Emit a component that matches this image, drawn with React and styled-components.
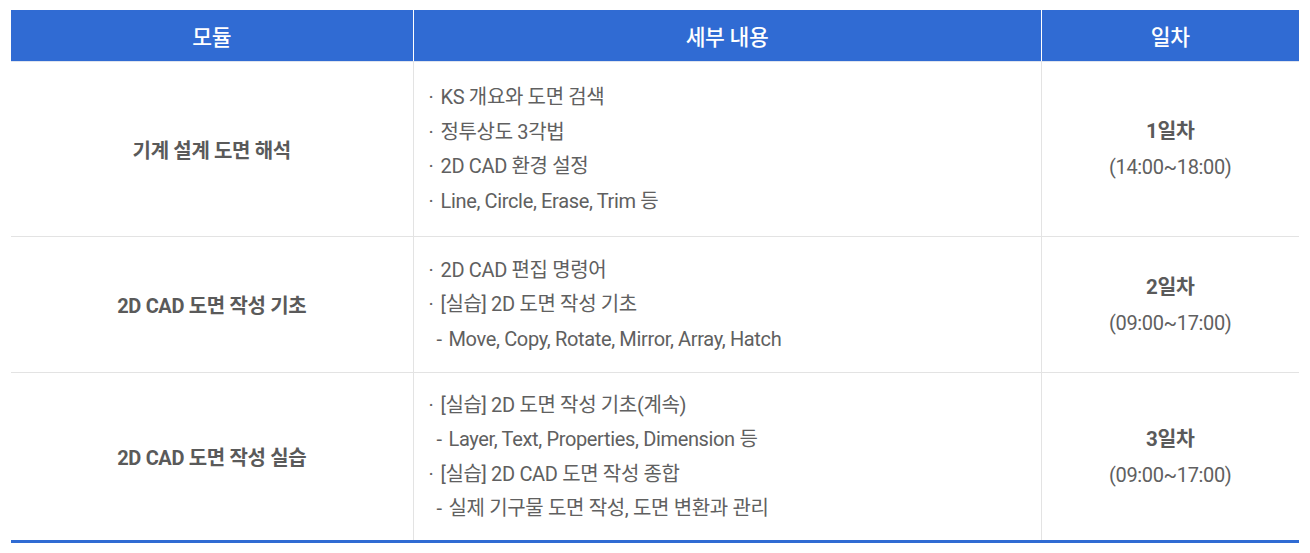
import styled, { createGlobalStyle } from 'styled-components';

const GlobalStyle = createGlobalStyle`
  body {
    margin: 0;
    background: #fff;
    font-family: Roboto, "Noto Sans CJK KR", sans-serif;
  }
`;

const rows = [
  {
    height: 175,
    module: '기계 설계 도면 해석',
    items: [
      '· KS 개요와 도면 검색',
      '· 정투상도 3각법',
      '· 2D CAD 환경 설정',
      '· Line, Circle, Erase, Trim 등',
    ],
    day: '1일차',
    time: '(14:00~18:00)',
  },
  {
    height: 136,
    module: '2D CAD 도면 작성 기초',
    items: [
      '· 2D CAD 편집 명령어',
      '· [실습] 2D 도면 작성 기초',
      '- Move, Copy, Rotate, Mirror, Array, Hatch',
    ],
    day: '2일차',
    time: '(09:00~17:00)',
  },
  {
    height: 169,
    module: '2D CAD 도면 작성 실습',
    items: [
      '· [실습] 2D 도면 작성 기초(계속)',
      '- Layer, Text, Properties, Dimension 등',
      '· [실습] 2D CAD 도면 작성 종합',
      '- 실제 기구물 도면 작성, 도면 변환과 관리',
    ],
    day: '3일차',
    time: '(09:00~17:00)',
  },
];

export default function App() {
  return (
    <>
      <GlobalStyle />
      <Wrap>
        <Table>
          <colgroup>
            <col style={{ width: 402 }} />
            <col style={{ width: 628 }} />
            <col />
          </colgroup>
          <thead>
            <tr>
              <Th>모듈</Th>
              <Th>세부 내용</Th>
              <Th>일차</Th>
            </tr>
          </thead>
          <tbody>
            {rows.map((r, i) => (
              <Row key={i} $h={r.height}>
                <ModuleCell>{r.module}</ModuleCell>
                <DetailCell>
                  {r.items.map((t, j) => {
                    const sub = t.startsWith('-');
                    return (
                      <Line key={j} $sub={sub}>
                        <Mark>{t[0]}</Mark>
                        {t.slice(2)}
                      </Line>
                    );
                  })}
                </DetailCell>
                <DayCell>
                  <Day>{r.day}</Day>
                  <Time>{r.time}</Time>
                </DayCell>
              </Row>
            ))}
          </tbody>
        </Table>
      </Wrap>
    </>
  );
}

const Wrap = styled.div`
  padding: 10px 11px;
`;

const Table = styled.table`
  width: 100%;
  border-collapse: collapse;
  table-layout: fixed;
  border-bottom: 3px solid #306bd3;
  color: #606060;
  letter-spacing: -0.35px;
`;

const Th = styled.th`
  height: 51px;
  padding: 0;
  background: #306bd3;
  color: #fff;
  font-size: 21.5px;
  font-weight: 500;
  border-left: 1px solid #fff;
  border-bottom: 1px solid #dfe4ee;
  &:first-child { border-left: 0; }
`;

const Row = styled.tr`
  height: ${p => p.$h}px;
`;

const Td = styled.td`
  padding: 0;
  border-top: 1px solid #e3e3e3;
  border-left: 1px solid #e3e3e3;
  vertical-align: middle;
  &:first-child { border-left: 0; }
`;

const ModuleCell = styled(Td)`
  text-align: center;
  font-size: 20px;
  font-weight: 700;
  color: #5a5a5a;
`;

const DetailCell = styled(Td)`
  padding: 0 15px;
  font-size: 20px;
`;

const Line = styled.div`
  line-height: 34.5px;
  padding-left: ${p => (p.$sub ? '8px' : '0')};
`;

const Mark = styled.span`
  display: inline-block;
  width: 12px;
`;

const DayCell = styled(Td)`
  text-align: center;
`;

const Day = styled.div`
  font-size: 20.5px;
  font-weight: 700;
  line-height: 36px;
  color: #5a5a5a;
`;

const Time = styled.div`
  font-size: 20px;
  line-height: 36px;
`;
